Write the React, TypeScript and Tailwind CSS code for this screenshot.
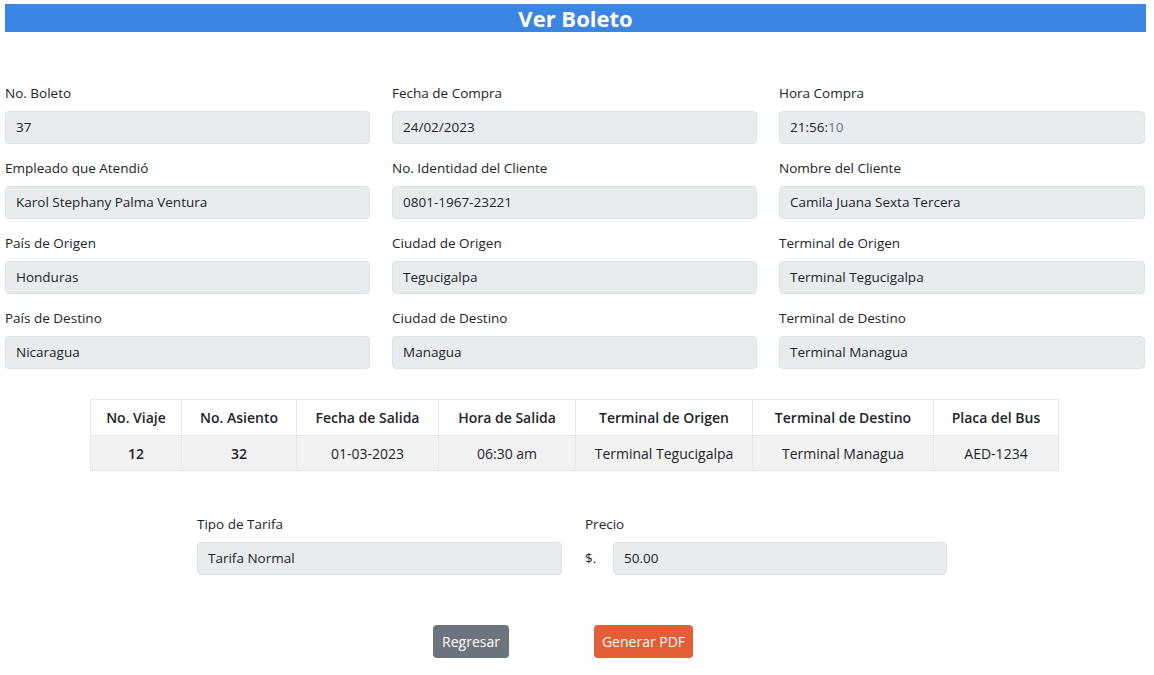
import React from 'react';

const fields = [
  ['No. Boleto', '37'],
  ['Fecha de Compra', '24/02/2023'],
  ['Hora Compra', '21:56:10'],
  ['Empleado que Atendió', 'Karol Stephany Palma Ventura'],
  ['No. Identidad del Cliente', '0801-1967-23221'],
  ['Nombre del Cliente', 'Camila Juana Sexta Tercera'],
  ['País de Origen', 'Honduras'],
  ['Ciudad de Origen', 'Tegucigalpa'],
  ['Terminal de Origen', 'Terminal Tegucigalpa'],
  ['País de Destino', 'Nicaragua'],
  ['Ciudad de Destino', 'Managua'],
  ['Terminal de Destino', 'Terminal Managua'],
];

const cols = [
  ['No. Viaje', '12', 'w-[91px]', true],
  ['No. Asiento', '32', 'w-[115px]', true],
  ['Fecha de Salida', '01-03-2023', 'w-[142px]', false],
  ['Hora de Salida', '06:30 am', 'w-[137px]', false],
  ['Terminal de Origen', 'Terminal Tegucigalpa', 'w-[177px]', false],
  ['Terminal de Destino', 'Terminal Managua', 'w-[181px]', false],
  ['Placa del Bus', 'AED-1234', 'w-[125px]', false],
] as const;

function Field({ label, value }: { label: string; value: string }) {
  return (
    <div>
      <label className="block text-[13.5px] leading-[20px] mb-[8px]">{label}</label>
      <div className="h-[33px] bg-[#e9ecef] border border-[#dee2e6] rounded-[4px] px-[10px] flex items-center text-[13.5px]">
        {value === '21:56:10' ? (
          <span>21:56:<span className="text-[#6c757d]">10</span></span>
        ) : (
          value
        )}
      </div>
    </div>
  );
}

export default function App() {
  return (
    <div className="w-[1154px] h-[675px] bg-white text-[#212529] font-['Open_Sans',sans-serif] pt-[4px]">
      <div className="mx-[5px] w-[1141px] h-[28px] bg-[#3a86e2] flex items-center justify-center">
        <h1 className="text-white font-bold text-[22px] leading-none">Ver Boleto</h1>
      </div>

      <div className="mx-[5px] w-[1140px] mt-[51px] grid grid-cols-[365px_365px_366px] gap-x-[22px] gap-y-[14px]">
        {fields.map(([l, v]) => (
          <Field key={l} label={l} value={v} />
        ))}
      </div>

      <div className="mt-[30px] ml-[90px]">
        <table className="border-collapse text-[14px] text-center">
          <thead>
            <tr className="h-[36px]">
              {cols.map(([h, , w]) => (
                <th key={h} className={`${w} border border-[#e5e7eb] font-semibold`}>{h}</th>
              ))}
            </tr>
          </thead>
          <tbody>
            <tr className="h-[35px] bg-[#f2f2f2]">
              {cols.map(([h, v, , b]) => (
                <td key={h} className={`border border-[#e5e7eb] ${b ? 'font-semibold' : ''}`}>{v}</td>
              ))}
            </tr>
          </tbody>
        </table>
      </div>

      <div className="mt-[43px] ml-[197px] flex gap-[23px]">
        <div className="w-[365px]">
          <Field label="Tipo de Tarifa" value="Tarifa Normal" />
        </div>
        <div className="w-[362px]">
          <label className="block text-[13.5px] leading-[20px] mb-[8px]">Precio</label>
          <div className="flex items-center">
            <span className="w-[28px] text-[13.5px]">$.</span>
            <div className="flex-1 h-[33px] bg-[#e9ecef] border border-[#dee2e6] rounded-[4px] px-[10px] flex items-center text-[13.5px]">
              50.00
            </div>
          </div>
        </div>
      </div>

      <div className="mt-[50px] ml-[433px] flex gap-[85px]">
        <button className="w-[76px] h-[33px] bg-[#6c757d] text-white text-[14px] rounded-[4px]">Regresar</button>
        <button className="w-[99px] h-[33px] bg-[#e35d36] text-white text-[14px] rounded-[4px]">Generar PDF</button>
      </div>
    </div>
  );
}
